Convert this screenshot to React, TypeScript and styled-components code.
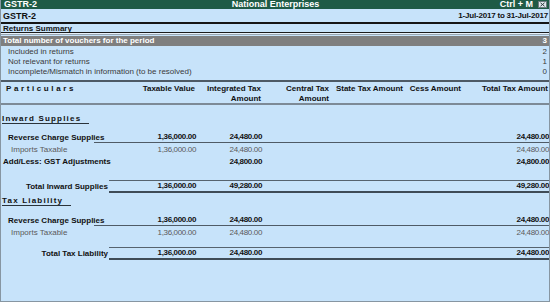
import { ReactElement } from 'react';
import styled, { createGlobalStyle } from 'styled-components';

type Amounts = [string, string, string, string, string, string];

const COLS = '62px 66px 68px 74px 58px 87px';
const BLANK: Amounts = ['', '', '', '', '', ''];

const GlobalStyle = createGlobalStyle`
  html, body {
    margin: 0;
    padding: 0;
    background: #c7e3fa;
  }
  * {
    box-sizing: border-box;
  }
`;

const CloseIcon = (): ReactElement => (
  <CloseBox>
    <svg width="9" height="7" viewBox="0 0 9 7">
      <rect x="0.5" y="0.5" width="8" height="6" fill="#dfe6ea" stroke="#6c7a80" />
      <path d="M2.5 1.8 L6.5 5.2 M6.5 1.8 L2.5 5.2" stroke="#2e3a40" strokeWidth="1" />
    </svg>
  </CloseBox>
);

const ValueCells = ({ values }: { values: Amounts }): ReactElement => (
  <>
    {values.map((v, i) => (
      <Cell key={i}>{v}</Cell>
    ))}
  </>
);

const App = (): ReactElement => {
  return (
    <Window>
      <GlobalStyle />
      <TitleBar>
        <span>GSTR-2</span>
        <TitleCenter>National Enterprises</TitleCenter>
        <TitleRight>
          Ctrl + M
          <CloseIcon />
        </TitleRight>
      </TitleBar>

      <CompanyRow>
        <CompanyName>GSTR-2</CompanyName>
        <Period>1-Jul-2017 to 31-Jul-2017</Period>
      </CompanyRow>

      <SummaryHead>Returns Summary</SummaryHead>
      <CountRow $highlight>
        <span>Total number of vouchers for the period</span>
        <span>3</span>
      </CountRow>
      <CountRow>
        <span>Included in returns</span>
        <span>2</span>
      </CountRow>
      <CountRow>
        <span>Not relevant for returns</span>
        <span>1</span>
      </CountRow>
      <CountRow>
        <span>Incomplete/Mismatch in information (to be resolved)</span>
        <span>0</span>
      </CountRow>

      <ColumnHead>
        <Particulars>Particulars</Particulars>
        <HeadCell>Taxable Value</HeadCell>
        <HeadCell>
          Integrated Tax
          <br />
          Amount
        </HeadCell>
        <HeadCell>
          Central Tax
          <br />
          Amount
        </HeadCell>
        <HeadCell>State Tax Amount</HeadCell>
        <HeadCell>Cess Amount</HeadCell>
        <HeadCell>Total Tax Amount</HeadCell>
      </ColumnHead>

      <SectionTitle $mt={8}>
        <span>Inward Supplies</span>
      </SectionTitle>

      <Row $mt={8}>
        <Label $w={93} $pl={7}>
          Reverse Charge Supplies
        </Label>
        <Values $lead={40} $kind="sub">
          <ValueCells values={['1,36,000.00', '24,480.00', '', '', '', '24,480.00']} />
        </Values>
      </Row>
      <Row $mt={2} $light>
        <Label $w={93} $pl={10}>
          Imports Taxable
        </Label>
        <Values $lead={40}>
          <ValueCells values={['1,36,000.00', '24,480.00', '', '', '', '24,480.00']} />
        </Values>
      </Row>
      <Row $mt={2}>
        <Label $w={93} $pl={2}>
          Add/Less: GST Adjustments
        </Label>
        <Values $lead={40}>
          <ValueCells values={['', '24,800.00', '', '', '', '24,800.00']} />
        </Values>
      </Row>
      <Row $mt={13}>
        <Label $w={108} $right>
          Total Inward Supplies
        </Label>
        <Values $lead={25} $kind="total">
          <ValueCells values={['1,36,000.00', '49,280.00', '', '', '', '49,280.00']} />
        </Values>
      </Row>

      <SectionTitle $mt={2}>
        <span>Tax Liability</span>
      </SectionTitle>

      <Row $mt={9}>
        <Label $w={93} $pl={7}>
          Reverse Charge Supplies
        </Label>
        <Values $lead={40} $kind="sub">
          <ValueCells values={['1,36,000.00', '24,480.00', '', '', '', '24,480.00']} />
        </Values>
      </Row>
      <Row $mt={2} $light>
        <Label $w={93} $pl={10}>
          Imports Taxable
        </Label>
        <Values $lead={40}>
          <ValueCells values={['1,36,000.00', '24,480.00', '', '', '', '24,480.00']} />
        </Values>
      </Row>
      <Row $mt={9}>
        <Label $w={108} $right>
          Total Tax Liability
        </Label>
        <Values $lead={25} $kind="total">
          <ValueCells values={['1,36,000.00', '24,480.00', '', '', '', '24,480.00']} />
        </Values>
      </Row>
      <Spacer>
        <ValueCells values={BLANK} />
      </Spacer>
    </Window>
  );
};

const Window = styled.div`
  width: 550px;
  height: 302px;
  display: flex;
  flex-direction: column;
  background: #c7e3fa;
  border-left: 1px solid #8796a2;
  border-right: 1px solid #8796a2;
  border-bottom: 1px solid #8796a2;
  font-family: 'Liberation Sans', Arial, sans-serif;
  font-size: 8px;
  color: #111;
  overflow: hidden;
`;

const TitleBar = styled.div`
  height: 9px;
  display: grid;
  grid-template-columns: 1fr auto 1fr;
  align-items: center;
  padding: 0 2px 0 3px;
  background: #1f5b46;
  color: #fff;
  font-weight: bold;
  font-size: 9px;
  line-height: 9px;
`;

const TitleCenter = styled.span`
  text-align: center;
`;

const TitleRight = styled.span`
  display: flex;
  justify-content: flex-end;
  align-items: center;
  gap: 5px;
  font-size: 9px;
`;

const CloseBox = styled.span`
  display: flex;
  width: 9px;
  height: 7px;
`;

const CompanyRow = styled.div`
  height: 15px;
  display: flex;
  justify-content: space-between;
  align-items: center;
  padding: 0 1px 0 2px;
  border-bottom: 2px solid #151515;
  font-weight: bold;
`;

const CompanyName = styled.span`
  font-size: 9px;
`;

const Period = styled.span`
  font-size: 8px;
  letter-spacing: -0.2px;
`;

const SummaryHead = styled.div`
  height: 9px;
  line-height: 9px;
  padding-left: 2px;
  font-weight: bold;
  border-bottom: 1px solid #1b1b1b;
  box-shadow: 0 1px 0 #e6f1fb, 0 2px 0 #9aa7b2;
  margin-bottom: 3px;
`;

const CountRow = styled.div<{ $highlight?: boolean }>`
  height: 10px;
  line-height: 10px;
  display: flex;
  justify-content: space-between;
  padding: ${(p) => (p.$highlight ? '0 2px 0 2px' : '0 2px 0 7px')};
  margin-bottom: ${(p) => (p.$highlight ? '1px' : '0')};
  background: ${(p) => (p.$highlight ? '#7f7f7f' : 'transparent')};
  color: ${(p) => (p.$highlight ? '#fff' : '#3a3a3a')};
  font-weight: ${(p) => (p.$highlight ? 'bold' : 'normal')};
`;

const ColumnHead = styled.div`
  margin-top: 3px;
  display: grid;
  grid-template-columns: 132px ${COLS};
  padding: 2px 1px 0 0;
  height: 25px;
  line-height: 10px;
  border-top: 2px solid #4d5a65;
  border-bottom: 2px solid #7d8a96;
  font-weight: bold;
`;

const Particulars = styled.span`
  padding-left: 5px;
  letter-spacing: 2.6px;
`;

const HeadCell = styled.span`
  text-align: right;
  white-space: nowrap;
`;

const SectionTitle = styled.div<{ $mt: number }>`
  margin-top: ${(p) => p.$mt}px;
  padding-left: 1px;
  span {
    display: inline-block;
    height: 11px;
    line-height: 11px;
    padding-right: 8px;
    font-weight: bold;
    letter-spacing: 1.2px;
    border-bottom: 1px solid #2a333a;
  }
`;

const Row = styled.div<{ $mt: number; $light?: boolean }>`
  margin-top: ${(p) => p.$mt}px;
  display: flex;
  align-items: center;
  font-weight: ${(p) => (p.$light ? 'normal' : 'bold')};
  color: ${(p) => (p.$light ? '#5a5a5a' : '#111')};
`;

const Label = styled.span<{ $w: number; $pl?: number; $right?: boolean }>`
  flex: 0 0 ${(p) => p.$w}px;
  width: ${(p) => p.$w}px;
  padding-left: ${(p) => p.$pl ?? 0}px;
  padding-right: ${(p) => (p.$right ? 1 : 0)}px;
  text-align: ${(p) => (p.$right ? 'right' : 'left')};
  white-space: nowrap;
  line-height: 10px;
  position: relative;
  z-index: 1;
`;

const Values = styled.div<{ $lead: number; $kind?: 'sub' | 'total' }>`
  flex: 1;
  display: grid;
  grid-template-columns: ${COLS};
  padding-left: ${(p) => p.$lead}px;
  padding-right: 1px;
  height: ${(p) => (p.$kind === 'total' ? 13 : p.$kind === 'sub' ? 11 : 10)}px;
  line-height: 10px;
  border-top: ${(p) => (p.$kind === 'total' ? '1px solid #56636e' : 'none')};
  border-bottom: ${(p) =>
    p.$kind === 'total' ? '2px solid #3f4c57' : p.$kind === 'sub' ? '1px solid #4f5b66' : 'none'};
`;

const Cell = styled.span`
  text-align: right;
  white-space: nowrap;
  letter-spacing: -0.35px;
`;

const Spacer = styled.div`
  flex: 1;
  visibility: hidden;
  display: grid;
  grid-template-columns: 132px ${COLS};
`;

export default App;
